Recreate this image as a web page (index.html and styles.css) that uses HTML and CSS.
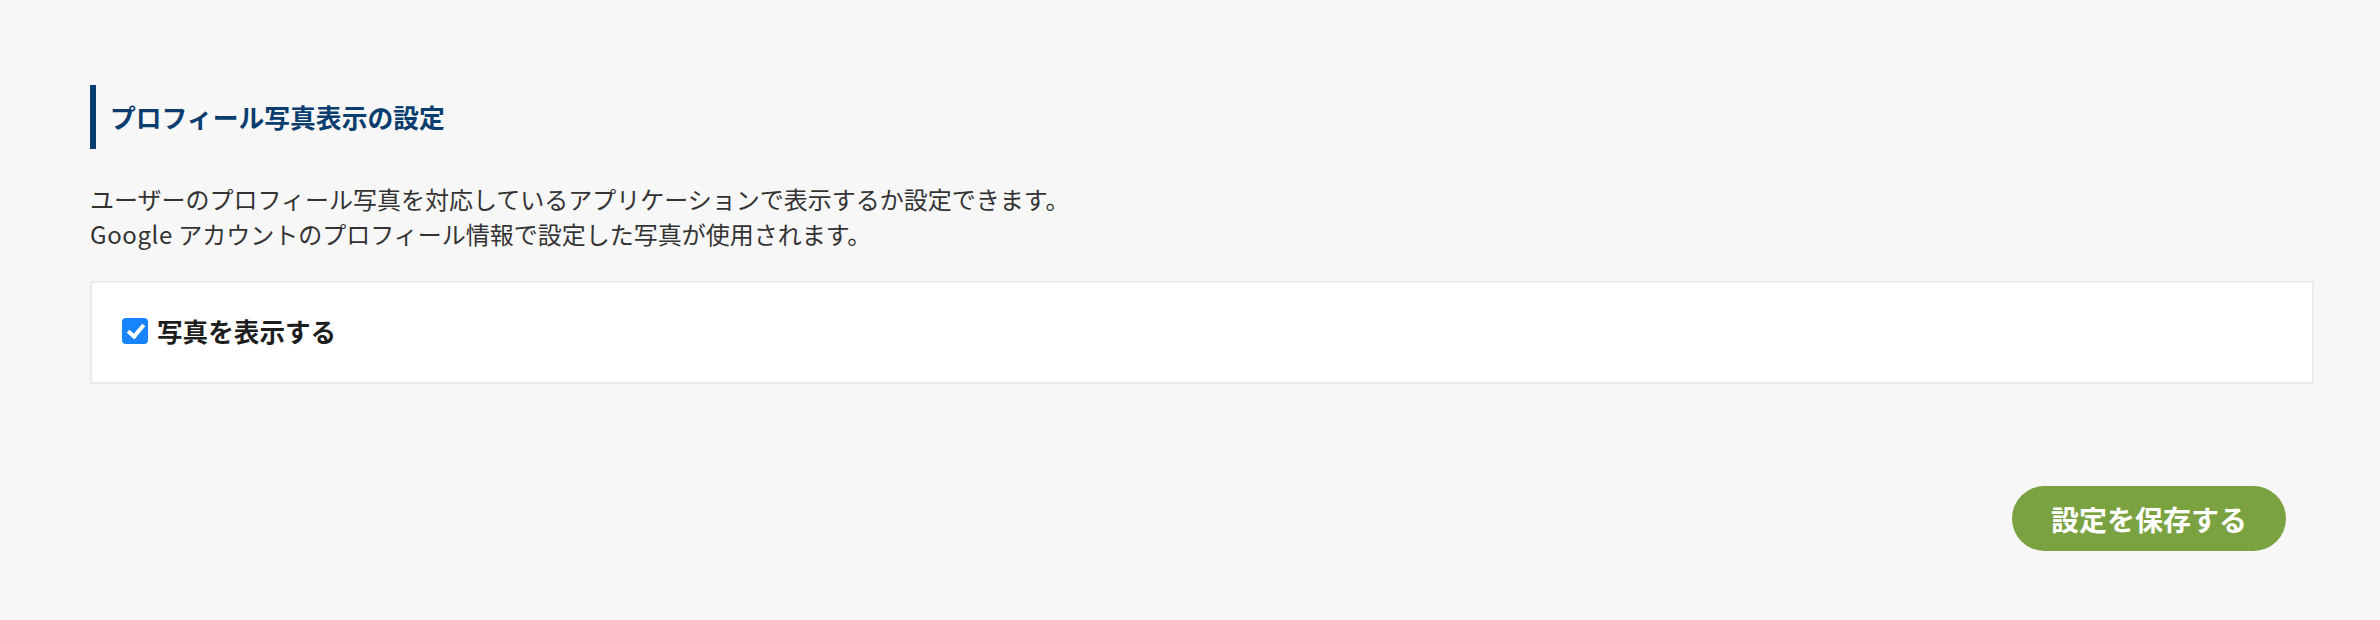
FILE: index.html
```html
<!DOCTYPE html>
<html lang="ja">
<head>
<meta charset="utf-8">
<title>プロフィール写真表示の設定</title>
<link rel="stylesheet" href="styles.css">
</head>
<body>
<main class="page">
  <h2 class="section-title">プロフィール写真表示の設定</h2>
  <p class="description">ユーザーのプロフィール写真を対応しているアプリケーションで表示するか設定できます。<br><span class="latin">Google</span> アカウントのプロフィール情報で設定した写真が使用されます。</p>
  <div class="card">
    <label class="check-row">
      <input type="checkbox" class="check" checked>
      <span class="check-label">写真を表示する</span>
    </label>
  </div>
  <div class="actions">
    <button type="button" class="save-btn">設定を保存する</button>
  </div>
</main>
</body>
</html>
```

FILE: styles.css
```css
html, body {
  margin: 0;
  padding: 0;
}
body {
  background: #f7f7f7;
  font-family: "Noto Sans CJK JP", "Noto Sans", sans-serif;
  color: #333;
  width: 2380px;
  height: 620px;
}
.page {
  padding: 85px 66px 0 90px;
}
.section-title {
  margin: 0;
  border-left: 6px solid #0b3d6e;
  padding: 12px 0 12px 14px;
  font-size: 25.8px;
  line-height: 40px;
  font-weight: 700;
  color: #0b3d6e;
}
.description {
  margin: 32px 0 0 0;
  font-size: 24px;
  line-height: 35px;
  color: #333;
}
.latin {
  letter-spacing: 0.6px;
}
.card {
  margin-top: 30px;
  background: #fff;
  border: 2px solid #ebebeb;
  padding: 28px 30px 32px 30px;
}
.check-row {
  display: flex;
  align-items: center;
  gap: 9px;
  height: 39px;
}
.check {
  appearance: none;
  -webkit-appearance: none;
  margin: 0;
  width: 26px;
  height: 26px;
  border-radius: 4px;
  background: #1884fc;
  position: relative;
  flex: none;
}
.check::before {
  content: "";
  position: absolute;
  left: 9px;
  top: 3px;
  width: 6px;
  height: 13px;
  border-right: 4px solid #fff;
  border-bottom: 4px solid #fff;
  transform: rotate(40deg);
}
.check-label {
  font-size: 25.6px;
  font-weight: 700;
  color: #1e1e1e;
  line-height: 39px;
}
.actions {
  display: flex;
  justify-content: flex-end;
  padding-right: 28px;
  margin-top: 102px;
}
.save-btn {
  height: 65px;
  width: 274px;
  border: none;
  border-radius: 33px;
  background: #7aa241;
  color: #fff;
  font-family: "Noto Sans CJK JP", "Noto Sans", sans-serif;
  font-size: 28px;
  font-weight: 700;
  padding: 0;
}
```
